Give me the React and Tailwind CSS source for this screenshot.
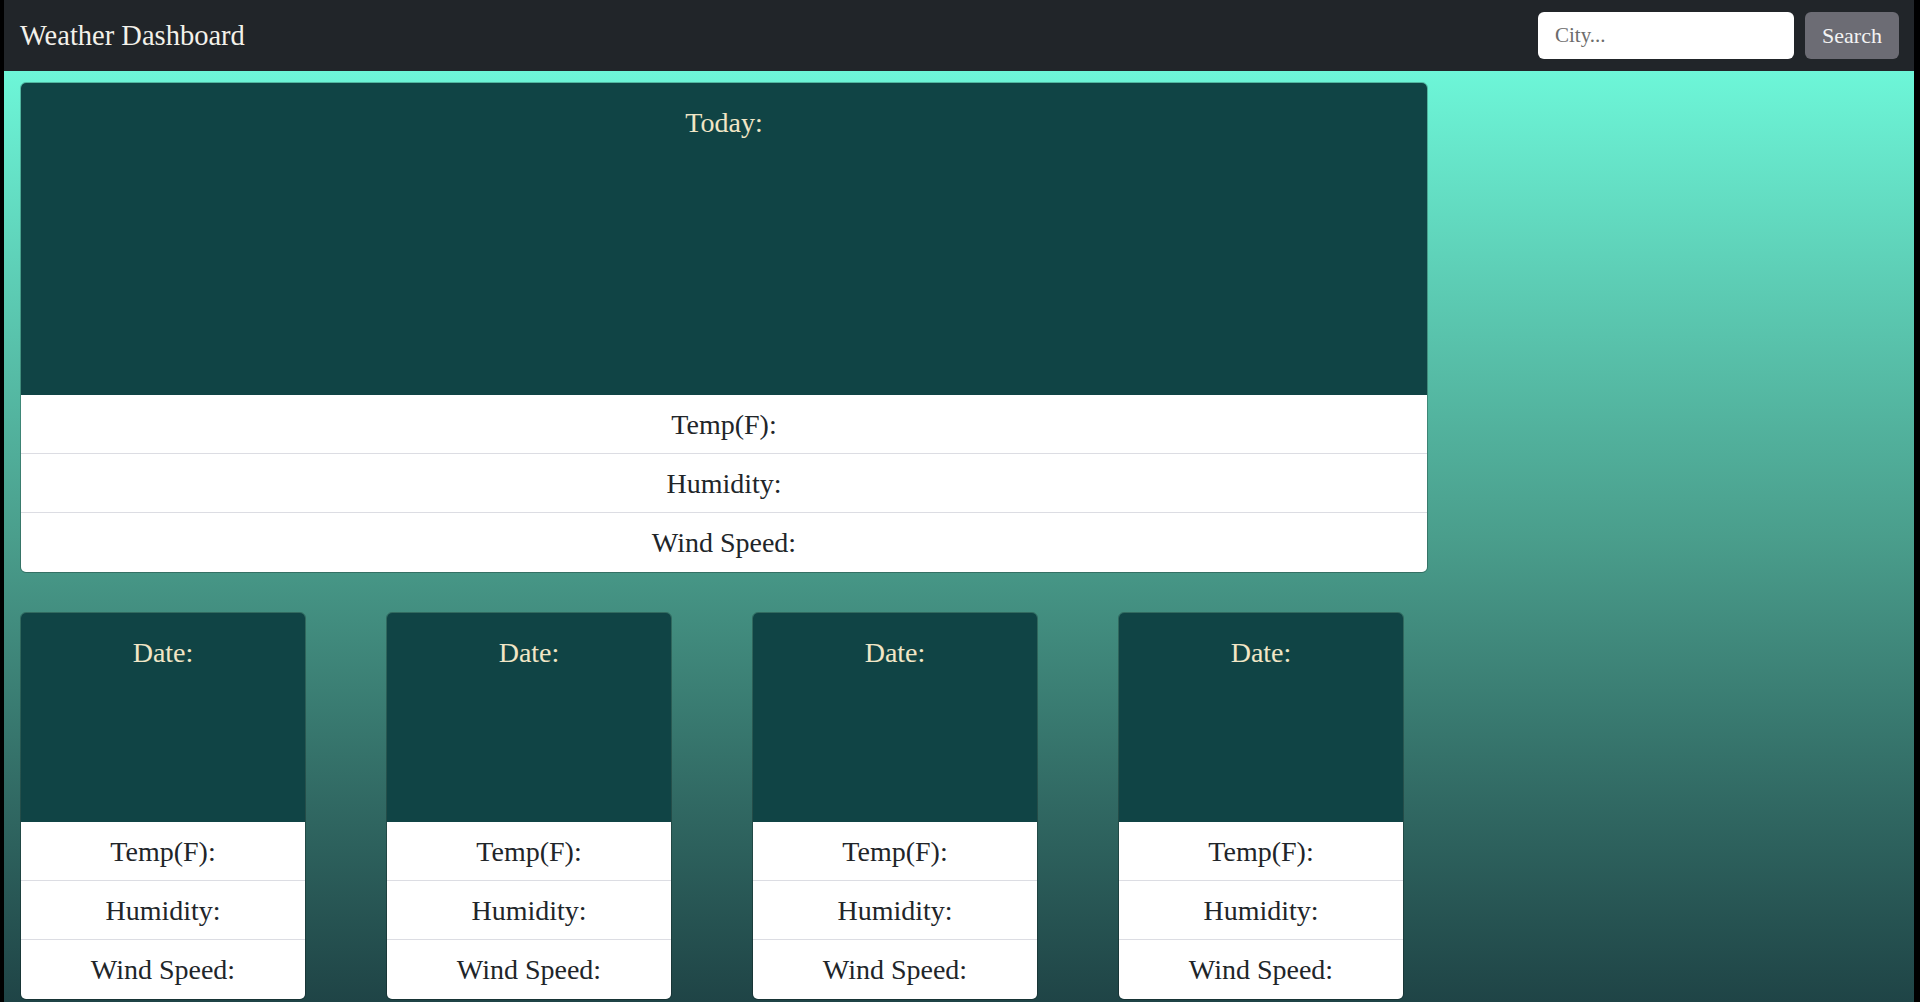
import React from 'react';

const serif = { fontFamily: '"Liberation Serif", "Times New Roman", serif' };

const rows = ['Temp(F):', 'Humidity:', 'Wind Speed:'];

const WeatherCard = ({ title, width, headerHeight }) => (
    <div className={`${width} shrink-0 rounded-md border border-black/25 overflow-hidden`}>
        {/* card header */}
        <div className={`${headerHeight} bg-[#104445] text-center pt-[23px]`}>
            <h3 className="text-[28px] leading-[34px] text-[#f1e6c6]">{title}</h3>
        </div>
        <ul className="bg-white">
            {rows.map((label, i) => (
                <li
                    key={label}
                    className={`h-[59px] pt-[13px] text-center text-[28px] leading-[34px] text-[#212529] ${
                        i < rows.length - 1 ? 'border-b border-[#dcdde3]' : ''
                    }`}
                >
                    {label}
                </li>
            ))}
        </ul>
    </div>
);

export default function App() {
    return (
        <div className="h-[1002px] w-full overflow-hidden bg-black pl-[4px] pr-[6px]" style={serif}>
            <div className="flex h-full flex-col">
                {/* Navbar */}
                <nav className="flex h-[71px] shrink-0 items-center justify-between bg-[#212529] pl-4 pr-[15px]">
                    <span className="pt-[2px] text-[28.5px] leading-none text-[#f3f1ea]">Weather Dashboard</span>
                    <div className="flex items-center gap-[11px]">
                        <input
                            type="text"
                            placeholder="City..."
                            className="h-[47px] w-[256px] rounded-md bg-white px-[17px] text-[21px] text-[#212529] placeholder:text-[#6c6c6c] outline-none"
                        />
                        <button className="h-[47px] w-[94px] rounded-md bg-[#6c6c74] text-[22px] text-[#f3f3f3]">
                            Search
                        </button>
                    </div>
                </nav>

                {/* Main */}
                <main className="flex-1 bg-gradient-to-b from-[#6df6d8] via-[#4a9e8c] to-[#1f4446] pl-4 pt-[11px]">
                    <WeatherCard title="Today:" width="w-[1408px]" headerHeight="h-[312px]" />

                    <div className="mt-[39px] flex gap-[80px]">
                        {[1, 2, 3, 4].map(n => (
                            <WeatherCard key={n} title="Date:" width="w-[286px]" headerHeight="h-[209px]" />
                        ))}
                    </div>
                </main>
            </div>
        </div>
    );
}
